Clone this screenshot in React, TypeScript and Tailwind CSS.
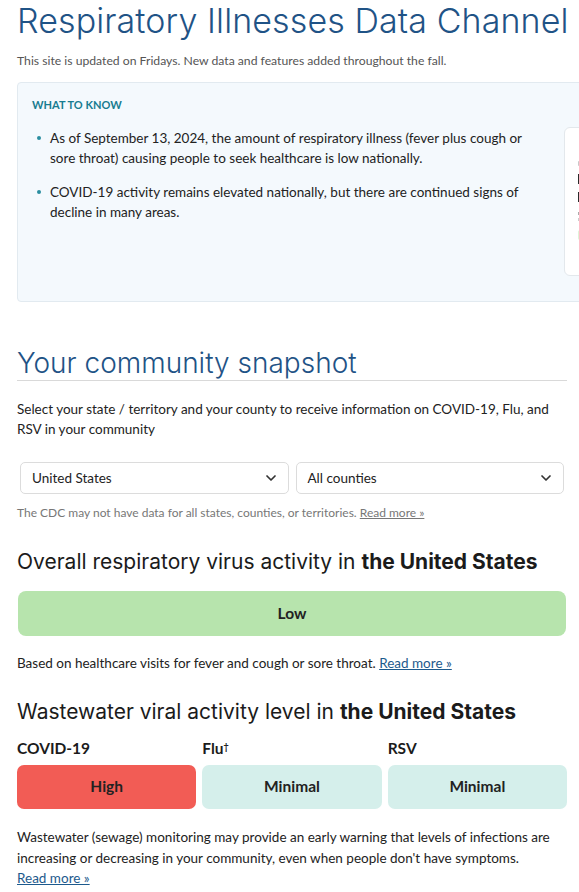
import { ChevronDown } from 'lucide-react'

const head = "font-['Inter','Open_Sans',sans-serif]"
const body = "font-['Lato','Noto_Sans',sans-serif]"

function Select({ label }: { label: string }) {
  return (
    <div className="flex h-[32px] flex-1 items-center justify-between rounded-[5px] border border-[#dcdcdc] bg-white pl-[11px] pr-[9px] text-[13.5px] text-[#222]">
      <span>{label}</span>
      <ChevronDown className="h-[16px] w-[16px] text-[#333]" strokeWidth={2.6} />
    </div>
  )
}

function Level({ name, level, color }: { name: React.ReactNode; level: string; color: string }) {
  return (
    <div className="flex flex-col">
      <div className="h-[22px] text-[15.5px] font-bold leading-[22px] text-[#1b1b1b]">{name}</div>
      <div className={`mt-[6px] flex h-[44px] items-center justify-center rounded-[7px] text-[15.5px] font-bold text-[#222] ${color}`}>
        {level}
      </div>
    </div>
  )
}

function App() {
  return (
    <div className={`min-h-screen w-full overflow-hidden bg-white pl-[17px] pr-[12px] text-[#222] ${body}`}>
      <h1 className={`pt-[1px] text-[34px] font-light leading-[40px] tracking-[0.1px] whitespace-nowrap text-[#1f5386] ${head}`}>
        Respiratory Illnesses Data Channel
      </h1>
      <p className="mt-[12px] text-[12.2px] leading-[16px] text-[#555]">
        This site is updated on Fridays. New data and features added throughout the fall.
      </p>

      <div className="mt-[13px] mr-[-60px] h-[220px] rounded-[4px] border border-[#e2eaf0] bg-[#f4f9fd] pl-[14px] pt-[14px]">
        <div className="text-[11px] font-bold leading-[16px] text-[#187c90]">WHAT TO KNOW</div>
        <div className="mt-[15px] flex gap-[18px]">
          <ul className="w-[514px] shrink-0 text-[13.5px] leading-[20px] text-[#222]">
            <li className="mb-[14px] flex">
              <span className="mt-[8px] ml-[5px] mr-[9px] h-[4px] w-[4px] shrink-0 rounded-full bg-[#2a8ea0]" />
              <span>
                As of September 13, 2024, the amount of respiratory illness (fever plus cough or sore throat) causing
                people to seek healthcare is low nationally.
              </span>
            </li>
            <li className="flex">
              <span className="mt-[8px] ml-[5px] mr-[9px] h-[4px] w-[4px] shrink-0 rounded-full bg-[#2a8ea0]" />
              <span>
                COVID-19 activity remains elevated nationally, but there are continued signs of decline in many areas.
              </span>
            </li>
          </ul>
          <div className="-mt-[1px] h-[149px] w-[200px] shrink-0 rounded-[6px] border border-[#e3e8ec] bg-white px-[13px] pt-[33px]">
            <div className="h-[5px] w-[90px] rounded-[1px] bg-[#c9c9c9]" />
            <div className="mt-[8px] h-[10px] w-[110px] bg-[#2b2b2b]" />
            <div className="mt-[8px] h-[10px] w-[130px] bg-[#2b2b2b]" />
            <div className="mt-[10px] h-[3px] w-[80px] bg-[#aaa]" />
            <div className="mt-[3px] h-[3px] w-[60px] bg-[#ccc]" />
            <div className="mt-[9px] h-[10px] w-[40px] rounded-[2px] bg-[#dff3d8]" />
          </div>
        </div>
      </div>

      <h2 className={`mt-[44px] border-b border-[#d9d9d9] text-[28px] font-light leading-[34px] text-[#1f5386] ${head}`}>
        Your community snapshot
      </h2>
      <p className="mt-[19px] text-[13.5px] leading-[19.5px] text-[#222]">
        Select your state / territory and your county to receive information on COVID-19, Flu, and RSV in your community
      </p>
      <div className="mx-[3px] mt-[23px] flex gap-[7px]">
        <Select label="United States" />
        <Select label="All counties" />
      </div>
      <p className="mt-[11px] text-[12px] leading-[16px] text-[#777]">
        The CDC may not have data for all states, counties, or territories.{' '}
        <span className="underline">Read more »</span>
      </p>

      <h3 className={`mt-[26px] text-[21px] leading-[30px] text-[#1b1b1b] ${head}`}>
        Overall respiratory virus activity in <span className="font-bold">the United States</span>
      </h3>
      <div className="mx-[1px] mt-[14px] flex h-[45px] items-center justify-center rounded-[8px] bg-[#b7e4ad] text-[15.5px] font-bold text-[#222]">
        Low
      </div>
      <p className="mt-[18px] text-[13.5px] leading-[19px] text-[#222]">
        Based on healthcare visits for fever and cough or sore throat.{' '}
        <span className="text-[#1d5a8d] underline">Read more »</span>
      </p>

      <h3 className={`mt-[24px] text-[21px] leading-[30px] text-[#1b1b1b] ${head}`}>
        Wastewater viral activity level in <span className="font-bold">the United States</span>
      </h3>
      <div className="mt-[10px] grid grid-cols-3 gap-[6px]">
        <Level name="COVID-19" level="High" color="bg-[#f25c55]" />
        <Level
          name={
            <>
              Flu<sup className="text-[9px]">†</sup>
            </>
          }
          level="Minimal"
          color="bg-[#d5efeb]"
        />
        <Level name="RSV" level="Minimal" color="bg-[#d5efeb]" />
      </div>
      <p className="mt-[18px] text-[13.5px] leading-[20.5px] text-[#222]">
        Wastewater (sewage) monitoring may provide an early warning that levels of infections are increasing or
        decreasing in your community, even when people don't have symptoms.
        <br />
        <span className="text-[#1d5a8d] underline">Read more »</span>
      </p>
    </div>
  )
}

export default App
